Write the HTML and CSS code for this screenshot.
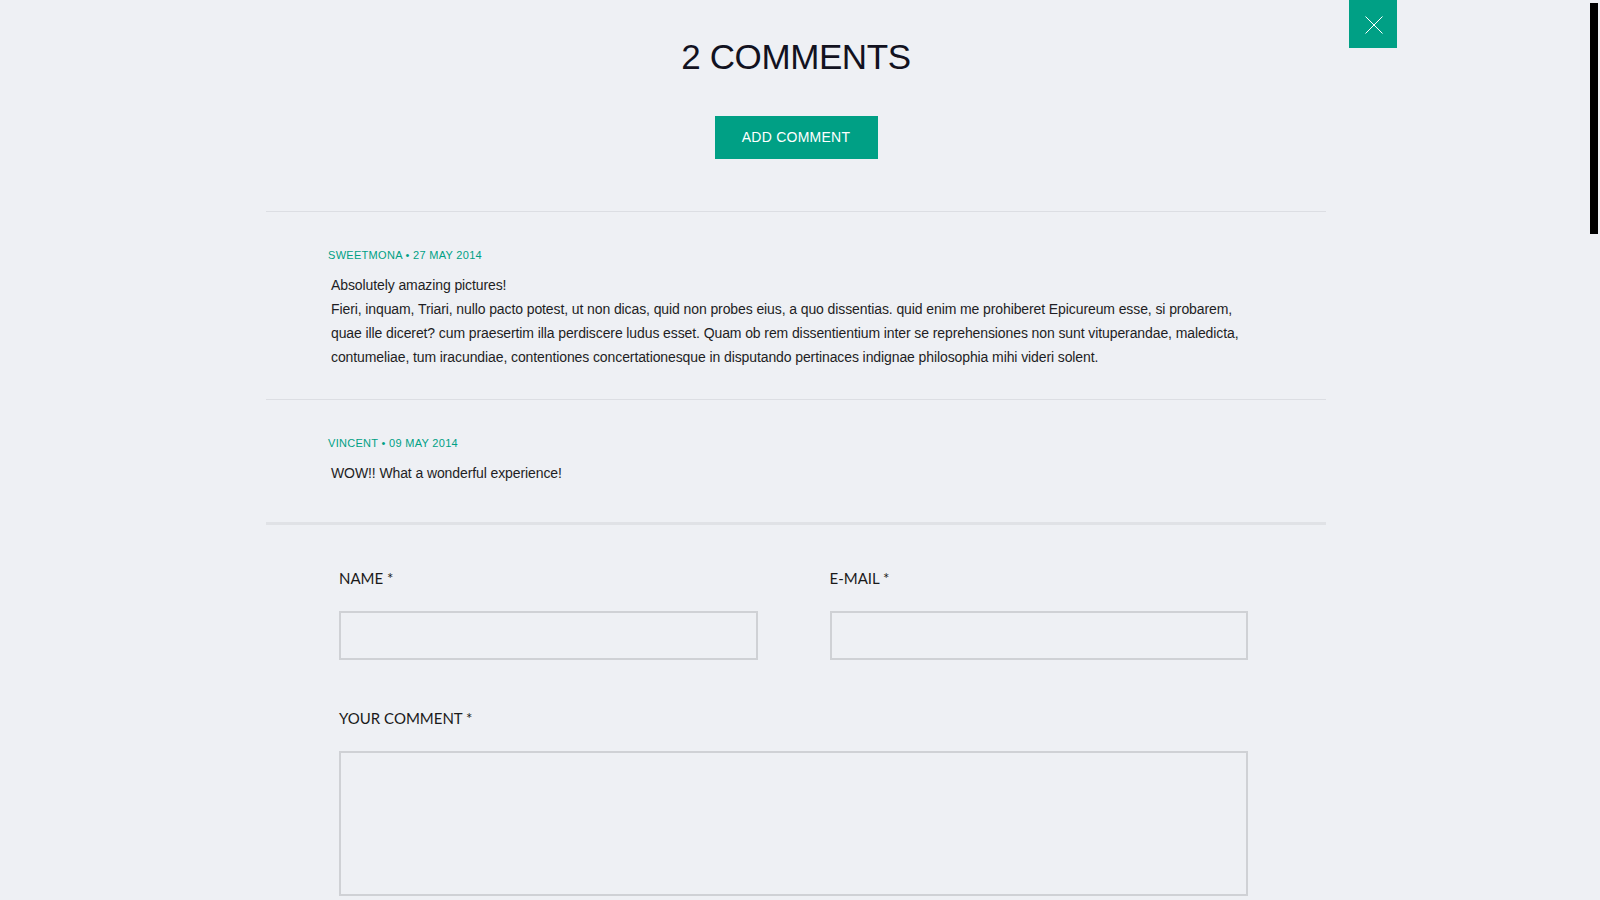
FILE: index.html
```html
<!DOCTYPE html>
<html lang="en">
<head>
<meta charset="utf-8">
<title>2 Comments</title>
<link rel="stylesheet" href="styles.css">
</head>
<body>
<div class="scroll-thumb"></div>
<main class="wrap">
  <button class="close" type="button" aria-label="Close">
    <svg width="48" height="48" viewBox="0 0 48 48"><path d="M16.5 16.5 L33.5 33.5 M33.5 16.5 L16.5 33.5" stroke="#ffffff" stroke-width="1" fill="none"/></svg>
  </button>
  <header class="head">
    <h1 class="title">2 COMMENTS</h1>
    <a class="btn" href="#form">ADD COMMENT</a>
  </header>
  <ul class="comments">
    <li class="comment">
      <p class="meta">SWEETMONA &bull; 27 MAY 2014</p>
      <p class="text">Absolutely amazing pictures!<br>Fieri, inquam, Triari, nullo pacto potest, ut non dicas, quid non probes eius, a quo dissentias. quid enim me prohiberet Epicureum esse, si probarem, quae ille diceret? cum praesertim illa perdiscere ludus esset. Quam ob rem dissentientium inter se reprehensiones non sunt vituperandae, maledicta, contumeliae, tum iracundiae, contentiones concertationesque in disputando pertinaces indignae philosophia mihi videri solent.</p>
    </li>
    <li class="comment">
      <p class="meta">VINCENT &bull; 09 MAY 2014</p>
      <p class="text">WOW!! What a wonderful experience!</p>
    </li>
  </ul>
  <form class="form" id="form">
    <div class="row">
      <label class="field">
        <span class="label">NAME *</span>
        <input class="input" type="text">
      </label>
      <label class="field">
        <span class="label">E-MAIL *</span>
        <input class="input" type="email">
      </label>
    </div>
    <label class="field">
      <span class="label">YOUR COMMENT *</span>
      <textarea class="area"></textarea>
    </label>
  </form>
</main>
</body>
</html>
```
FILE: styles.css
```css
html, body {
  margin: 0;
  height: 100%;
  overflow: hidden;
  background: #eef0f4;
}
body {
  padding-right: 8px;
  font-family: "Liberation Sans", Arial, sans-serif;
  color: #1e1e24;
}
.scroll-thumb {
  position: fixed;
  top: 3px;
  right: 2px;
  width: 8px;
  height: 231px;
  background: #000;
}
.wrap {
  position: relative;
  width: 1060px;
  margin: 0 auto;
}
.close {
  position: absolute;
  top: 0;
  left: calc(100% + 23px);
  width: 48px;
  height: 48px;
  padding: 0;
  border: 0;
  background: #00a085;
  display: block;
}
.close svg { display: block; }
.head {
  display: flex;
  flex-direction: column;
  align-items: center;
}
.title {
  margin: 0;
  padding-top: 39px;
  font-size: 35px;
  line-height: 36px;
  font-weight: 400;
  letter-spacing: -0.4px;
  color: #12121f;
}
.btn {
  margin-top: 41px;
  width: 163px;
  height: 43px;
  line-height: 43px;
  text-align: center;
  background: #00a085;
  color: #fff;
  font-size: 14px;
  letter-spacing: 0.25px;
  text-decoration: none;
}
.comments {
  list-style: none;
  margin: 52px 0 0;
  padding: 0;
}
.comment {
  border-top: 1px solid #dcdee3;
  padding: 36px 76px 30px 62px;
}
.meta {
  margin: 0;
  font-size: 11px;
  line-height: 14px;
  letter-spacing: 0.3px;
  color: #00a085;
}
.text {
  margin: 11px 0 0 3px;
  font-size: 14px;
  line-height: 24px;
  letter-spacing: -0.1px;
  color: #1e1e24;
}
.form {
  margin-top: 7px;
  border-top: 3px solid #e0e2e6;
  padding: 43px 78px 0 73px;
  display: flex;
  flex-direction: column;
  gap: 48px;
}
.row {
  display: grid;
  grid-template-columns: 1fr 1fr;
  column-gap: 72px;
}
.field {
  display: flex;
  flex-direction: column;
  gap: 23px;
}
.label {
  font-family: "Lato", sans-serif;
  font-size: 15px;
  line-height: 20px;
  color: #1a1a1a;
}
.input, .area {
  box-sizing: border-box;
  width: 100%;
  margin: 0;
  border: 2px solid #cfd1d5;
  background: transparent;
  font: inherit;
}
.input { height: 49px; }
.area { height: 145px; resize: none; }
```
